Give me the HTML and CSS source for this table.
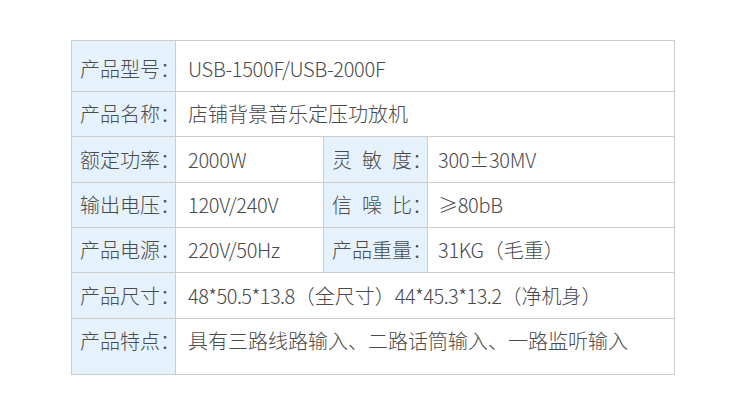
FILE: index.html
```html
<!DOCTYPE html>
<html lang="zh">
<head>
<meta charset="utf-8">
<link rel="stylesheet" href="styles.css">
</head>
<body>
<div class="page">
  <table class="spec">
    <colgroup>
      <col class="c-label"><col class="c-val1"><col class="c-label2"><col class="c-val2">
    </colgroup>
    <tr class="row first">
      <th>产品型号：</th>
      <td colspan="3"><span class="num">USB-1500F/USB-2000F</span></td>
    </tr>
    <tr class="row">
      <th>产品名称：</th>
      <td colspan="3">店铺背景音乐定压功放机</td>
    </tr>
    <tr class="row tall">
      <th>额定功率：</th>
      <td><span class="num">2000W</span></td>
      <th class="mid">灵&ensp;敏&ensp;度：</th>
      <td class="v2"><span class="num">300±30MV</span></td>
    </tr>
    <tr class="row">
      <th>输出电压：</th>
      <td><span class="num">120V/240V</span></td>
      <th class="mid">信&ensp;噪&ensp;比：</th>
      <td class="v2"><span class="num">≥80bB</span></td>
    </tr>
    <tr class="row">
      <th>产品电源：</th>
      <td><span class="num">220V/50Hz</span></td>
      <th class="mid">产品重量：</th>
      <td class="v2"><span class="num">31KG</span>（毛重）</td>
    </tr>
    <tr class="row tall">
      <th>产品尺寸：</th>
      <td colspan="3"><span class="num tight">48*50.5*13.8</span>（全尺寸）<span class="num tight">44*45.3*13.2</span>（净机身）</td>
    </tr>
    <tr class="row last">
      <th>产品特点：</th>
      <td colspan="3">具有三路线路输入、二路话筒输入、一路监听输入</td>
    </tr>
  </table>
</div>
</body>
</html>
```
FILE: styles.css
```css
html, body {
  margin: 0;
  padding: 0;
  background: #ffffff;
}
.page {
  padding: 40px 0 0 71px;
}
.spec {
  border-collapse: collapse;
  table-layout: fixed;
  width: 603px;
  font-family: "Noto Sans CJK SC", "Noto Sans", sans-serif;
  font-weight: 300;
  font-size: 20px;
  color: #4a4a4a;
}
.c-label { width: 104px; }
.c-val1 { width: 148px; }
.c-label2 { width: 104px; }
.c-val2 { width: 247px; }
.spec th, .spec td {
  border: 1px solid #cccccc;
  height: 44px;
  padding: 0;
  text-align: left;
  vertical-align: middle;
  white-space: nowrap;
  overflow: visible;
  line-height: 26px;
}
.spec th {
  font-weight: 300;
  background: #e5f2fc;
  padding-left: 8px;
}
.spec td {
  padding-left: 12px;
}
.spec th.mid {
  padding-left: 8px;
}
.spec td.v2 {
  padding-left: 10px;
}
.num {
  letter-spacing: -0.3px;
}
.num.tight {
  letter-spacing: -0.55px;
}
.tall th, .tall td {
  height: 45px;
}
.first th, .first td {
  height: 44px;
  padding-top: 6px;
}
.last th, .last td {
  height: 44px;
  padding-bottom: 11px;
}
```
